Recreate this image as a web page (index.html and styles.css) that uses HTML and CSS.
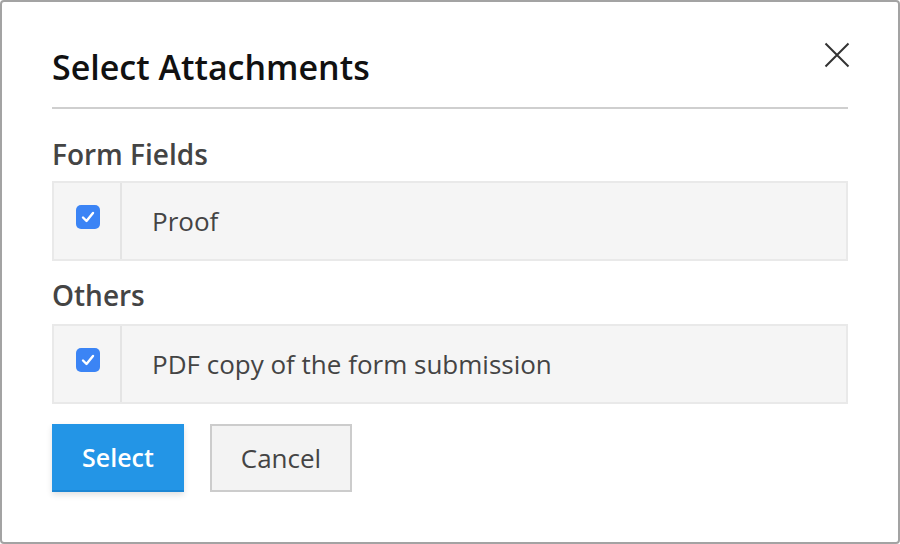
FILE: index.html
```html
<!DOCTYPE html>
<html>
<head>
<meta charset="utf-8">
<link rel="stylesheet" href="styles.css">
</head>
<body>
<div class="dialog">
  <div class="header">
    <h1 class="title">Select Attachments</h1>
    <button class="close" aria-label="Close">
      <svg width="26" height="26" viewBox="0 0 26 26"><path d="M1.5 1.5L24.5 24.5M24.5 1.5L1.5 24.5" stroke="#333" stroke-width="2" fill="none"/></svg>
    </button>
  </div>
  <div class="divider"></div>
  <h2 class="section">Form Fields</h2>
  <div class="row">
    <div class="check-cell"><span class="checkbox"><svg width="14" height="12" viewBox="0 0 14 12"><path d="M2 6.5L5.5 10L12 2" stroke="#fff" stroke-width="2.4" fill="none" stroke-linecap="round" stroke-linejoin="round"/></svg></span></div>
    <div class="label">Proof</div>
  </div>
  <h2 class="section">Others</h2>
  <div class="row">
    <div class="check-cell"><span class="checkbox"><svg width="14" height="12" viewBox="0 0 14 12"><path d="M2 6.5L5.5 10L12 2" stroke="#fff" stroke-width="2.4" fill="none" stroke-linecap="round" stroke-linejoin="round"/></svg></span></div>
    <div class="label">PDF copy of the form submission</div>
  </div>
  <div class="actions">
    <button class="btn btn-primary">Select</button>
    <button class="btn btn-default">Cancel</button>
  </div>
</div>
</body>
</html>
```
FILE: styles.css
```css
* { box-sizing: border-box; }
html, body { margin: 0; padding: 0; background: #fff; }
body { font-family: "Open Sans", "Liberation Sans", sans-serif; }
.dialog {
  width: 900px;
  height: 544px;
  border: 2px solid #a3a3a3;
  border-radius: 4px;
  padding: 0 50px;
  background: #fff;
}
.header {
  display: flex;
  justify-content: space-between;
  align-items: flex-start;
  height: 105px;
}
.title {
  margin: 44px 0 0;
  font-size: 34px;
  font-weight: 600;
  color: #111;
  line-height: 42px;
}
.close {
  margin-top: 40px;
  margin-right: -2px;
  padding: 0;
  border: 0;
  background: none;
  width: 26px;
  height: 26px;
}
.divider { height: 2px; background: #cfcfcf; }
.section {
  margin: 27px 0 9px;
  font-size: 28px;
  font-weight: 600;
  color: #444;
  line-height: 36px;
}
.row + .section { margin-top: 16px; margin-bottom: 11px; }
.row {
  display: flex;
  height: 80px;
  border: 2px solid #e9e9e9;
  background: #f5f5f5;
}
.check-cell {
  width: 68px;
  border-right: 2px solid #e4e4e4;
  display: flex;
  justify-content: center;
  align-items: center;
}
.checkbox {
  width: 24px;
  height: 24px;
  border-radius: 5px;
  background: #3b84f5;
  display: flex;
  justify-content: center;
  align-items: center;
  margin-left: 2px;
  margin-top: -8px;
}
.label {
  display: flex;
  align-items: center;
  padding-left: 30px;
  font-size: 26px;
  color: #444;
}
.actions {
  display: flex;
  gap: 26px;
  margin-top: 20px;
}
.btn {
  font-family: "Open Sans", "Liberation Sans", sans-serif;
  font-size: 26px;
  height: 68px;
  padding: 0;
}
.btn-primary {
  width: 132px;
  background: #2395e6;
  color: #fff;
  border: 0;
  border-bottom: 2px solid #1c86d4;
  font-weight: 600;
  font-size: 25px;
  box-shadow: 0 3px 6px rgba(0,0,0,0.12);
}
.btn-default {
  width: 142px;
  background: #f3f3f3;
  color: #444;
  border: 2px solid #cccccc;
}
```
